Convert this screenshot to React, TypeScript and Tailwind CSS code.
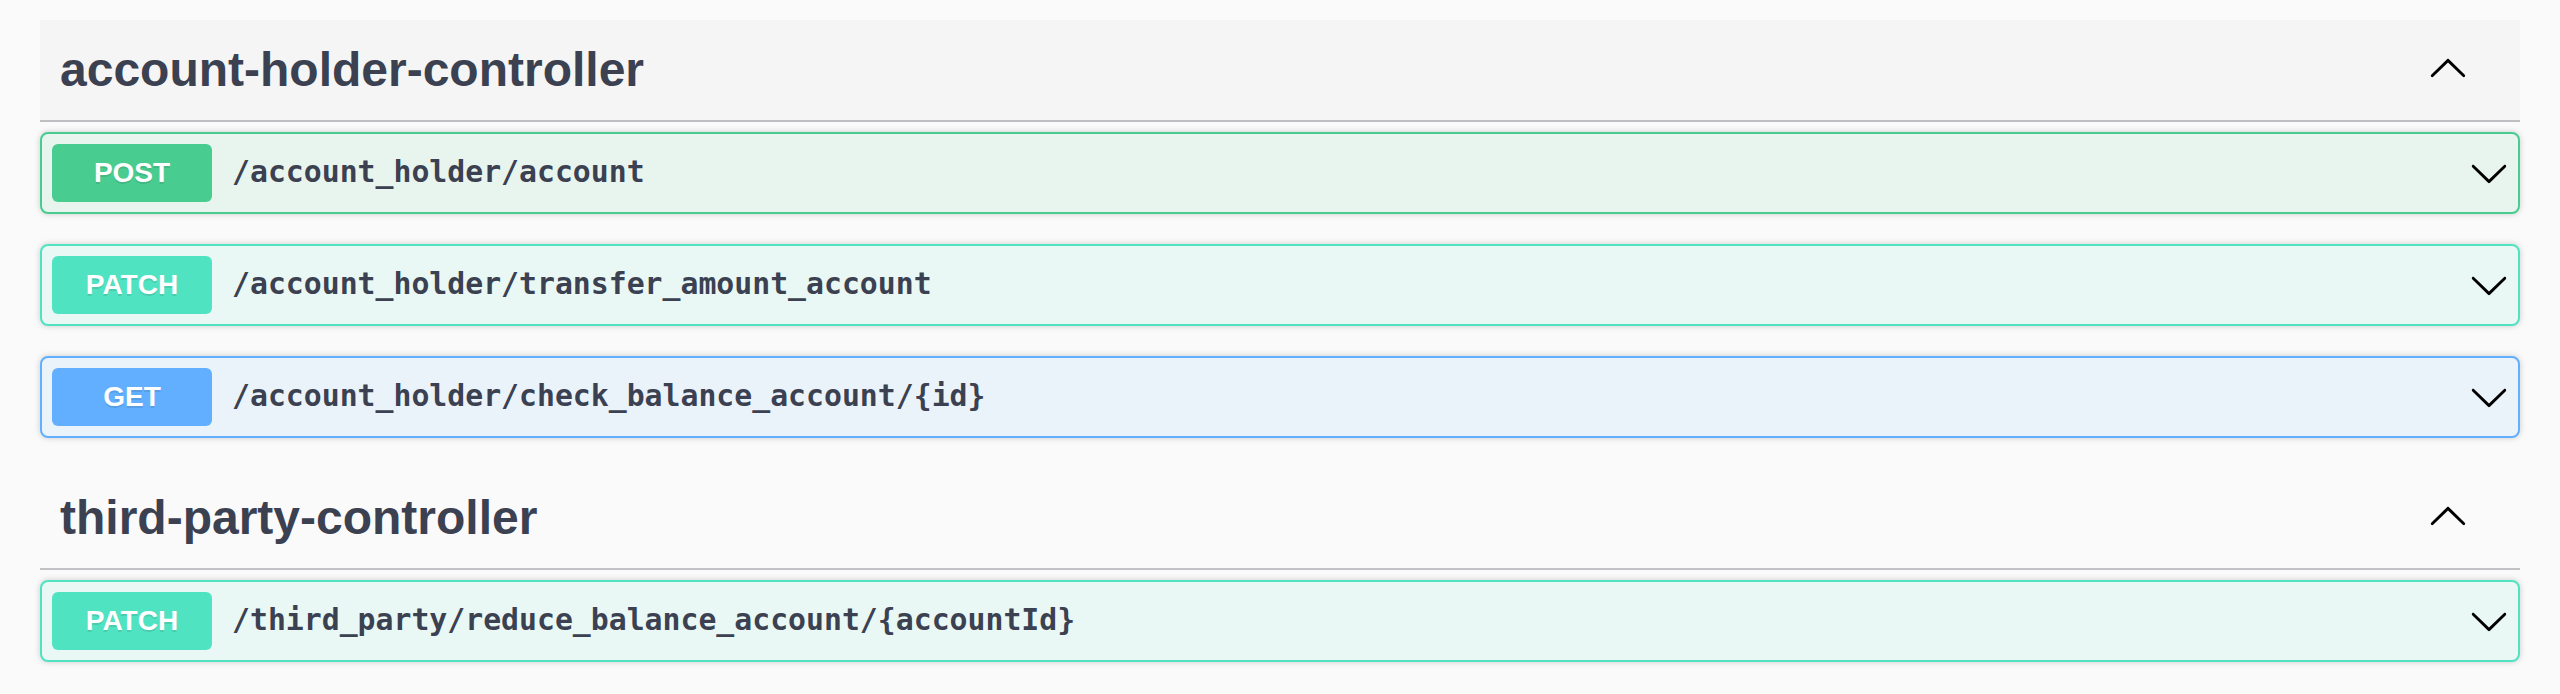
import { FC } from "react";

type Method = "POST" | "PATCH" | "GET";

interface Op {
  method: Method;
  path: string;
}

interface Tag {
  name: string;
  hovered?: boolean;
  ops: Op[];
}

const TAGS: Tag[] = [
  {
    name: "account-holder-controller",
    hovered: true,
    ops: [
      { method: "POST", path: "/account_holder/account" },
      { method: "PATCH", path: "/account_holder/transfer_amount_account" },
      { method: "GET", path: "/account_holder/check_balance_account/{id}" },
    ],
  },
  {
    name: "third-party-controller",
    ops: [{ method: "PATCH", path: "/third_party/reduce_balance_account/{accountId}" }],
  },
];

// block / badge colours per http method
const STYLES: Record<Method, { block: string; badge: string }> = {
  POST: { block: "border-[#49cc90] bg-[#e8f5ef]", badge: "bg-[#49cc90]" },
  PATCH: { block: "border-[#50e3c2] bg-[#e9f8f4]", badge: "bg-[#50e3c2]" },
  GET: { block: "border-[#61affe] bg-[#ebf3fa]", badge: "bg-[#61affe]" },
};

const ARROW =
  "M17.418 6.109c.272-.268.709-.268.979 0s.271.701 0 .969l-7.908 7.83c-.27.268-.707.268-.979 0l-7.908-7.83c-.27-.268-.27-.701 0-.969.271-.268.709-.268.979 0L10 13.25l7.418-7.141z";

const Arrow: FC<{ up?: boolean; className?: string }> = ({ up, className }) => (
  <svg
    viewBox="0 0 20 20"
    width={40}
    height={40}
    className={`${up ? "rotate-180" : ""} ${className ?? ""}`}
    fill="#000"
  >
    <path d={ARROW} />
  </svg>
);

const OpBlock: FC<{ op: Op }> = ({ op }) => {
  const s = STYLES[op.method];
  return (
    <div
      className={`flex h-[82px] items-center rounded-[8px] border-2 px-[10px] shadow-[0_0_6px_rgba(0,0,0,0.19)] ${s.block}`}
    >
      <span
        className={`flex h-[58px] w-[160px] shrink-0 items-center justify-center rounded-[6px] text-[28px] font-bold text-white [text-shadow:0_2px_0_rgba(0,0,0,0.1)] ${s.badge}`}
        style={{ fontFamily: '"Liberation Sans", Arial, sans-serif' }}
      >
        {op.method}
      </span>
      <span
        className="flex-1 pl-[20px] text-[29.8px] font-semibold leading-none text-[#3b4151] -mt-[3px]"
        style={{ fontFamily: '"DejaVu Sans Mono", "Liberation Mono", monospace' }}
      >
        {op.path}
      </span>
      <Arrow className="shrink-0 -mr-[1px]" />
    </div>
  );
};

const TagSection: FC<{ tag: Tag }> = ({ tag }) => (
  <div>
    <div
      className={`flex h-[102px] items-center border-b-2 border-[rgba(59,65,81,0.3)] pl-[20px] pr-[52px] ${
        tag.hovered ? "bg-[#f5f5f5]" : ""
      }`}
    >
      <h3
        className="flex-1 text-[48px] font-bold text-[#3b4151]"
        style={{ fontFamily: '"Liberation Sans", Arial, sans-serif' }}
      >
        {tag.name}
      </h3>
      <Arrow up className="mb-[2px] shrink-0" />
    </div>
    <div className="mt-[10px] flex flex-col gap-[30px] pb-[30px]">
      {tag.ops.map((op, i) => (
        <OpBlock key={i} op={op} />
      ))}
    </div>
  </div>
);

export default function App() {
  return (
    <div className="min-h-screen w-full bg-[#fafafa] px-[40px] pt-[20px]">
      {TAGS.map((t) => (
        <TagSection key={t.name} tag={t} />
      ))}
    </div>
  );
}
